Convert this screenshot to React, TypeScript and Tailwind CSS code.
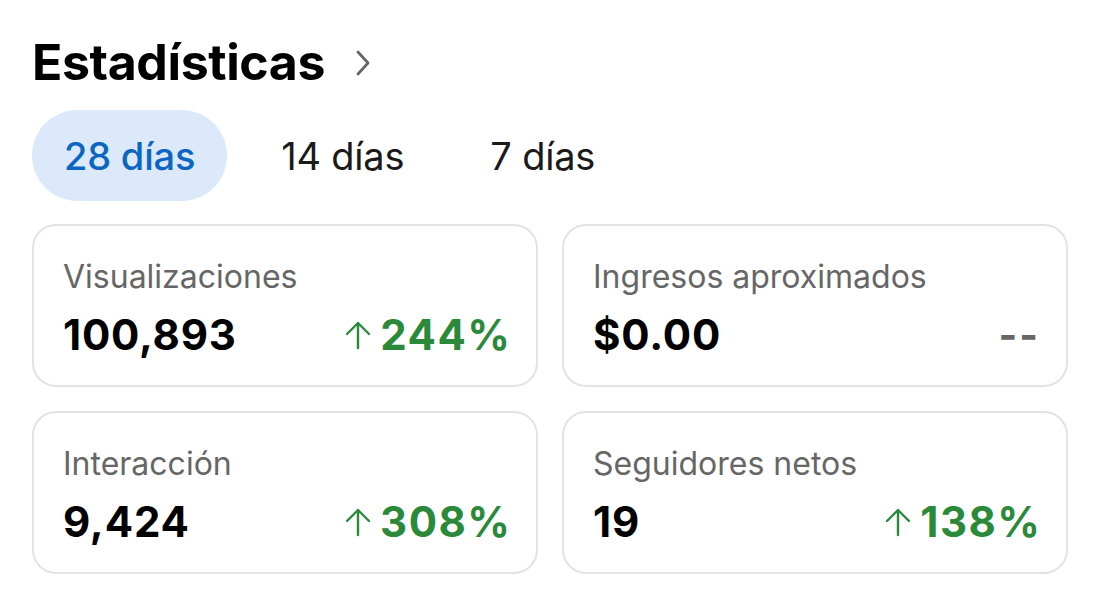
import { useState } from "react";

type Stat = {
  label: string;
  value: string;
  change: string | null;
};

const STATS: Stat[] = [
  { label: "Visualizaciones", value: "100,893", change: "244%" },
  { label: "Ingresos aproximados", value: "$0.00", change: null },
  { label: "Interacción", value: "9,424", change: "308%" },
  { label: "Seguidores netos", value: "19", change: "138%" },
];

const RANGES = ["28 días", "14 días", "7 días"];

export default function App() {
  const [range, setRange] = useState(0);

  return (
    <div className="min-h-screen bg-white px-[32px] pt-[34px] font-['Inter','Liberation_Sans',sans-serif] text-black">
      <div className="flex items-center gap-[31px]">
        <h1 className="text-[50px] font-bold leading-[56px] tracking-[-0.4px]">
          Estadísticas
        </h1>
        <svg
          width="14"
          height="26"
          viewBox="0 0 14 26"
          fill="none"
          className="mt-[2px]"
        >
          <path
            d="M2 2 L12 13 L2 24"
            stroke="#666666"
            strokeWidth="2.8"
            strokeLinecap="round"
            strokeLinejoin="round"
          />
        </svg>
      </div>

      <div className="mt-[20px] flex items-center gap-[22px]">
        {RANGES.map((r, i) => (
          <button
            key={r}
            onClick={() => setRange(i)}
            className={`flex h-[91px] items-center rounded-full px-[32px] text-[38px] leading-none tracking-[-0.2px] ${
              range === i
                ? "bg-[#dce9fb] font-medium text-[#0a66c2]"
                : "font-normal text-[#1a1a1a]"
            }`}
          >
            {r}
          </button>
        ))}
      </div>

      <div className="mt-[23px] grid grid-cols-2 gap-[24px]">
        {STATS.map((s) => (
          <StatCard key={s.label} stat={s} />
        ))}
      </div>
    </div>
  );
}

function StatCard({ stat }: { stat: Stat }) {
  return (
    <div className="flex h-[163px] flex-col rounded-[24px] border-2 border-[#e3e3e3] pl-[29px] pr-[26px] pt-[33px]">
      <div className="text-[32px] leading-[36px] text-[#666666]">
        {stat.label}
      </div>
      <div className="mt-[16px] flex items-center justify-between">
        <span className="text-[42px] font-bold leading-[48px] tracking-[0.8px]">
          {stat.value}
        </span>
        {stat.change ? (
          <span className="flex items-center gap-[9px] text-[42px] font-bold leading-[48px] tracking-[1.5px] text-[#2b8a3a]">
            <svg width="26" height="30" viewBox="0 0 26 30" fill="none">
              <path
                d="M13 28 V3 M2 14 L13 3 L24 14"
                stroke="#2b8a3a"
                strokeWidth="2.4"
                strokeLinecap="round"
                strokeLinejoin="round"
              />
            </svg>
            <span className="-mr-[1.5px]">{stat.change}</span>
          </span>
        ) : (
          <span className="text-[40px] font-bold leading-[48px] tracking-[2px] text-[#666666]">
            --
          </span>
        )}
      </div>
    </div>
  );
}
